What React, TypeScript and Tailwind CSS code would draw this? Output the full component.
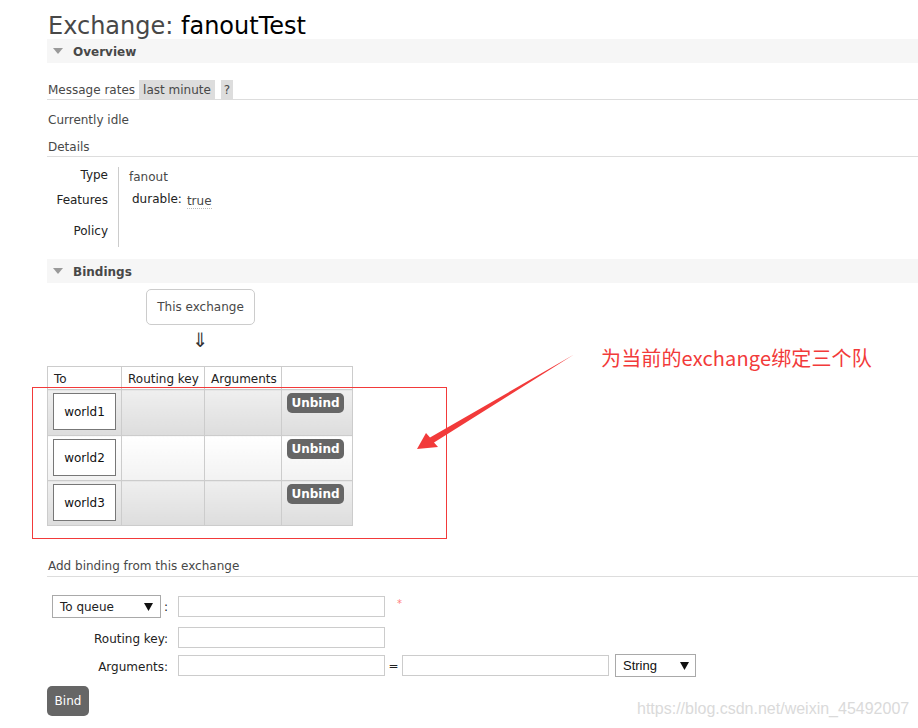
import React from "react";

const Tri = () => (
  <svg width="10" height="6" viewBox="0 0 10 6" className="shrink-0">
    <polygon points="0,0 10,0 5,6" fill="#9a9a9a" />
  </svg>
);

const SelTri = () => (
  <svg width="9" height="8" viewBox="0 0 9 8" className="shrink-0">
    <polygon points="0,0 9,0 4.5,8" fill="#111" />
  </svg>
);

const Bar = ({ title }: { title: string }) => (
  <div className="h-[24px] bg-[#f6f6f6] flex items-center pl-[6px] gap-[10px]">
    <Tri />
    <span className="font-bold text-[#484848] leading-none pt-[1px]">{title}</span>
  </div>
);

const rows = ["world1", "world2", "world3"];

export default function App() {
  return (
    <div className="relative w-[918px] h-[728px] bg-white overflow-hidden font-['DejaVu_Sans',sans-serif] text-[12px] text-[#484848]">
      <div className="pl-[47px]">
        <h1 className="h-[39px] pt-[14px] pl-[1px] text-[24px] leading-none font-normal whitespace-nowrap">
          <span className="text-[#484848]">Exchange: </span>
          <span className="text-black">fanoutTest</span>
        </h1>
        <Bar title="Overview" />

        <div className="mt-[17px] h-[20px] flex items-center border-b border-[#dddddd] pl-[1px]">
          <span>Message rates</span>
          <span className="ml-[4px] bg-[#dddddd] px-[4px] h-[19px] flex items-center">last minute</span>
          <span className="ml-[6px] bg-[#dddddd] px-[3px] h-[19px] flex items-center">?</span>
        </div>

        <div className="mt-[9px] h-[20px] flex items-center pl-[1px] pt-[1px]">Currently idle</div>

        <div className="mt-[7px] h-[21px] flex items-center border-b border-[#dddddd] pl-[1px] pt-[1px]">Details</div>

        <div className="mt-[10px] grid grid-cols-[72px_auto] leading-[14px]">
          <div className="border-r border-[#cccccc] pr-[10px] text-right text-[#222]">
            <div className="h-[18px] pt-[1px]">Type</div>
            <div className="h-[28px] pt-[8px]">Features</div>
            <div className="h-[34px] pt-[11px]">Policy</div>
          </div>
          <div className="pl-[10px]">
            <div className="h-[18px] pt-[3px]">fanout</div>
            <div className="h-[28px] pt-[7px] pl-[3px] flex items-start">
              <span className="text-[#222]">durable:</span>
              <span className="ml-[5px] mt-[2px] border-b border-dotted border-[#bbbbbb] leading-[14px]">true</span>
            </div>
            <div className="h-[34px]" />
          </div>
        </div>

        <div className="mt-[12px]">
          <Bar title="Bindings" />
        </div>

        <div className="ml-[99px] mt-[6px] w-[109px]">
          <div className="h-[36px] border border-[#cccccc] rounded-[5px] flex items-center justify-center">
            This exchange
          </div>
          <div className="h-[41px] flex justify-center pt-[5px] text-[20px] leading-[20px] text-[#333]">⇓</div>
        </div>

        <table className="border-collapse text-[#222]">
          <thead>
            <tr className="h-[23px]">
              <th className="w-[74px] border border-[#cccccc] text-left font-normal pl-[6px] pt-[2px]">To</th>
              <th className="w-[83px] border border-[#cccccc] text-left font-normal pl-[6px] pt-[2px]">Routing key</th>
              <th className="w-[77px] border border-[#cccccc] text-left font-normal pl-[6px] pt-[2px]">Arguments</th>
              <th className="w-[71px] border border-[#cccccc]"></th>
            </tr>
          </thead>
          <tbody>
            {rows.map((r, i) => {
              const bg =
                i % 2 === 0
                  ? "bg-gradient-to-b from-[#efefef] to-[#dddddd]"
                  : "bg-gradient-to-b from-[#ffffff] to-[#f2f2f2]";
              return (
                <tr key={r} className={i === 0 ? "h-[46px]" : "h-[45px]"}>
                  <td className={`border border-[#cccccc] align-top pl-[5px] pt-[3px] ${bg}`}>
                    <div className="w-[63px] h-[37px] bg-white border border-[#777777] flex items-center justify-center text-[#111]">
                      {r}
                    </div>
                  </td>
                  <td className={`border border-[#cccccc] ${bg}`}></td>
                  <td className={`border border-[#cccccc] ${bg}`}></td>
                  <td className={`border border-[#cccccc] align-top pl-[5px] pt-[3px] ${bg}`}>
                    <div className="w-[57px] h-[20px] bg-[#666666] rounded-[5px] text-white font-bold flex items-center justify-center">
                      Unbind
                    </div>
                  </td>
                </tr>
              );
            })}
          </tbody>
        </table>

        <div className="mt-[30px] h-[21px] flex items-center border-b border-[#dddddd] pl-[1px]">
          Add binding from this exchange
        </div>

        <div className="mt-[18px] flex items-center h-[23px]">
          <div className="w-[131px] pr-[10px] flex items-center justify-end text-[#222]">
            <div className="w-[109px] h-[23px] border border-[#a9a9a9] flex items-center justify-between pl-[7px] pr-[7px]">
              <span>To queue</span>
              <SelTri />
            </div>
            <span className="ml-[3px]">:</span>
          </div>
          <div className="w-[207px] h-[21px] border border-[#cccccc]" />
          <span className="ml-[12px] -mt-[6px] text-[#ff8080] text-[10px]">*</span>
        </div>

        <div className="mt-[9px] flex items-center h-[21px]">
          <div className="w-[131px] pr-[10px] text-right text-[#222] pt-[3px]">Routing key:</div>
          <div className="w-[207px] h-[21px] border border-[#cccccc]" />
        </div>

        <div className="mt-[6px] flex items-center h-[23px]">
          <div className="w-[131px] pr-[10px] text-right text-[#222] pt-[3px]">Arguments:</div>
          <div className="w-[207px] h-[21px] border border-[#cccccc]" />
          <span className="w-[17px] text-center text-[#222]">=</span>
          <div className="w-[207px] h-[21px] border border-[#cccccc]" />
          <div className="ml-[6px] w-[81px] h-[23px] border border-[#a9a9a9] flex items-center justify-between pl-[7px] pr-[6px] font-['Liberation_Sans',sans-serif] text-[13px] text-[#111]">
            <span>String</span>
            <SelTri />
          </div>
        </div>

        <div className="mt-[9px] w-[42px] h-[30px] bg-[#666666] rounded-[5px] text-white flex items-center justify-center">
          Bind
        </div>
      </div>

      {/* annotation overlays */}
      <div className="absolute left-[32px] top-[387px] w-[415px] h-[152px] border border-[#f23a3a] pointer-events-none" />
      <svg className="absolute left-0 top-0 pointer-events-none" width="918" height="728" viewBox="0 0 918 728">
        <polygon
          points="417,449 426,433 430,437.5 574,354.5 434,442.5 438,447"
          fill="#f23a3a"
        />
      </svg>
      <div className="absolute left-[601px] top-[343px] leading-[30px] text-[20px] tracking-[0.15px] text-[#f23a3a] font-['Noto_Sans_CJK_SC',sans-serif] whitespace-nowrap">
        为当前的exchange绑定三个队
      </div>
      <div className="absolute left-[637px] top-[699px] text-[16px] leading-[20px] text-[#dadada] font-['Liberation_Sans',sans-serif] whitespace-nowrap">
        https://blog.csdn.net/weixin_45492007
      </div>
    </div>
  );
}
